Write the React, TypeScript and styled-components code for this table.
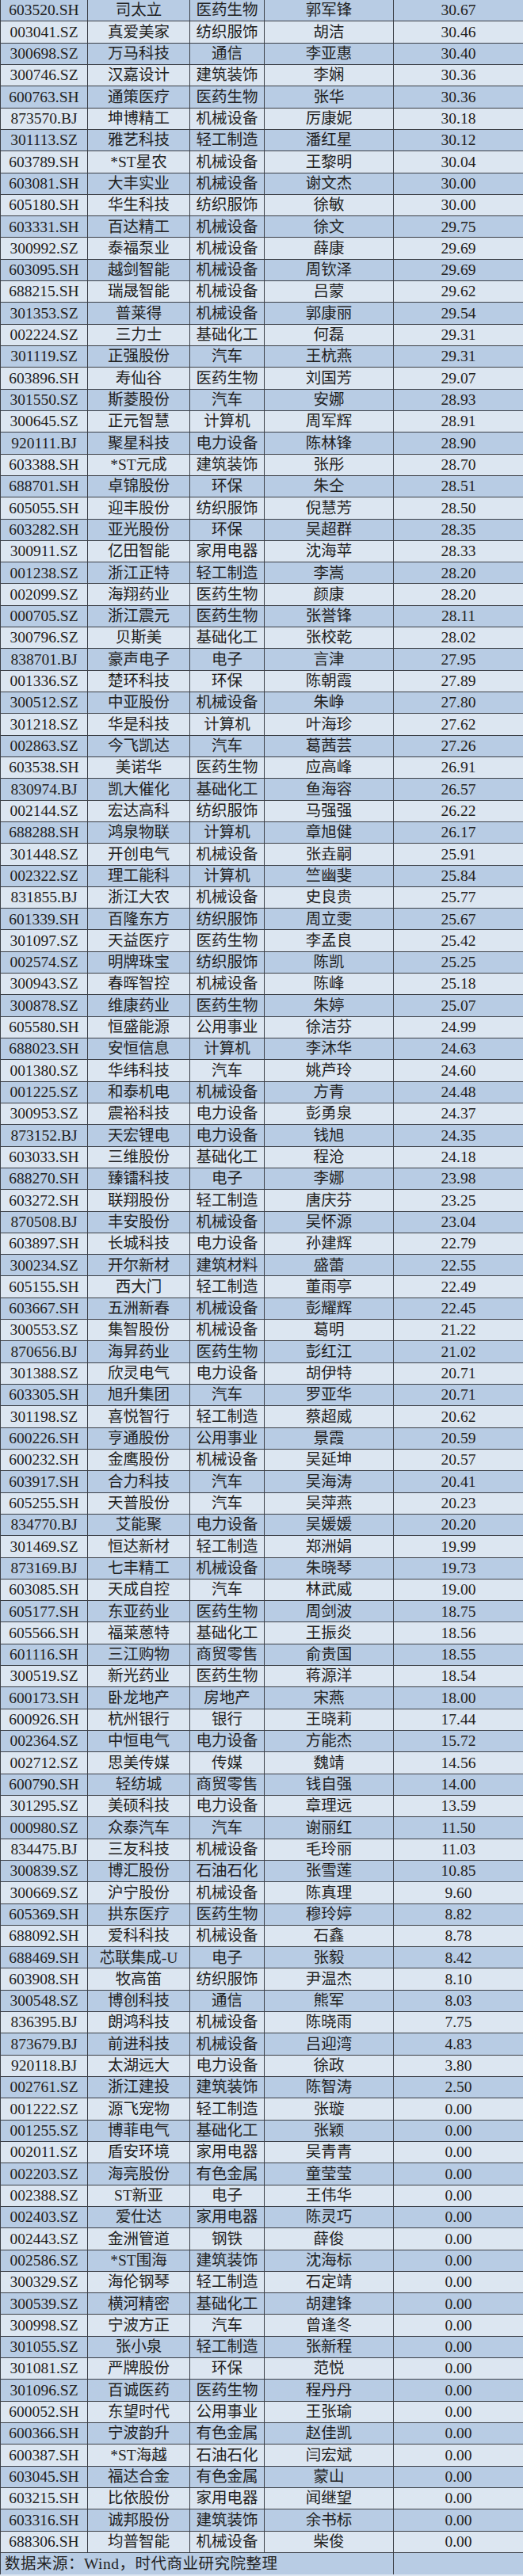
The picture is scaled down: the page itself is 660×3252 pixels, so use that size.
import React from "react";
import styled, { createGlobalStyle } from "styled-components";

const GlobalStyle = createGlobalStyle`
  html, body {
    margin: 0;
    padding: 0;
    background: #dce6f1;
  }
  * { box-sizing: border-box; }
`;

const rawData = `
603520.SH 司太立 医药生物 郭军锋 30.67
003041.SZ 真爱美家 纺织服饰 胡洁 30.46
300698.SZ 万马科技 通信 李亚惠 30.40
300746.SZ 汉嘉设计 建筑装饰 李娴 30.36
600763.SH 通策医疗 医药生物 张华 30.36
873570.BJ 坤博精工 机械设备 厉康妮 30.18
301113.SZ 雅艺科技 轻工制造 潘红星 30.12
603789.SH *ST星农 机械设备 王黎明 30.04
603081.SH 大丰实业 机械设备 谢文杰 30.00
605180.SH 华生科技 纺织服饰 徐敏 30.00
603331.SH 百达精工 机械设备 徐文 29.75
300992.SZ 泰福泵业 机械设备 薛康 29.69
603095.SH 越剑智能 机械设备 周钦泽 29.69
688215.SH 瑞晟智能 机械设备 吕蒙 29.62
301353.SZ 普莱得 机械设备 郭康丽 29.54
002224.SZ 三力士 基础化工 何磊 29.31
301119.SZ 正强股份 汽车 王杭燕 29.31
603896.SH 寿仙谷 医药生物 刘国芳 29.07
301550.SZ 斯菱股份 汽车 安娜 28.93
300645.SZ 正元智慧 计算机 周军辉 28.91
920111.BJ 聚星科技 电力设备 陈林锋 28.90
603388.SH *ST元成 建筑装饰 张彤 28.70
688701.SH 卓锦股份 环保 朱仝 28.51
605055.SH 迎丰股份 纺织服饰 倪慧芳 28.50
603282.SH 亚光股份 环保 吴超群 28.35
300911.SZ 亿田智能 家用电器 沈海苹 28.33
001238.SZ 浙江正特 轻工制造 李嵩 28.20
002099.SZ 海翔药业 医药生物 颜康 28.20
000705.SZ 浙江震元 医药生物 张誉锋 28.11
300796.SZ 贝斯美 基础化工 张校乾 28.02
838701.BJ 豪声电子 电子 言津 27.95
001336.SZ 楚环科技 环保 陈朝霞 27.89
300512.SZ 中亚股份 机械设备 朱峥 27.80
301218.SZ 华是科技 计算机 叶海珍 27.62
002863.SZ 今飞凯达 汽车 葛茜芸 27.26
603538.SH 美诺华 医药生物 应高峰 26.91
830974.BJ 凯大催化 基础化工 鱼海容 26.57
002144.SZ 宏达高科 纺织服饰 马强强 26.22
688288.SH 鸿泉物联 计算机 章旭健 26.17
301448.SZ 开创电气 机械设备 张垚嗣 25.91
002322.SZ 理工能科 计算机 竺幽斐 25.84
831855.BJ 浙江大农 机械设备 史良贵 25.77
601339.SH 百隆东方 纺织服饰 周立雯 25.67
301097.SZ 天益医疗 医药生物 李孟良 25.42
002574.SZ 明牌珠宝 纺织服饰 陈凯 25.25
300943.SZ 春晖智控 机械设备 陈峰 25.18
300878.SZ 维康药业 医药生物 朱婷 25.07
605580.SH 恒盛能源 公用事业 徐洁芬 24.99
688023.SH 安恒信息 计算机 李沐华 24.63
001380.SZ 华纬科技 汽车 姚芦玲 24.60
001225.SZ 和泰机电 机械设备 方青 24.48
300953.SZ 震裕科技 电力设备 彭勇泉 24.37
873152.BJ 天宏锂电 电力设备 钱旭 24.35
603033.SH 三维股份 基础化工 程沧 24.18
688270.SH 臻镭科技 电子 李娜 23.98
603272.SH 联翔股份 轻工制造 唐庆芬 23.25
870508.BJ 丰安股份 机械设备 吴怀源 23.04
603897.SH 长城科技 电力设备 孙建辉 22.79
300234.SZ 开尔新材 建筑材料 盛蕾 22.55
605155.SH 西大门 轻工制造 董雨亭 22.49
603667.SH 五洲新春 机械设备 彭耀辉 22.45
300553.SZ 集智股份 机械设备 葛明 21.22
870656.BJ 海昇药业 医药生物 彭红江 21.02
301388.SZ 欣灵电气 电力设备 胡伊特 20.71
603305.SH 旭升集团 汽车 罗亚华 20.71
301198.SZ 喜悦智行 轻工制造 蔡超威 20.62
600226.SH 亨通股份 公用事业 景霞 20.59
600232.SH 金鹰股份 机械设备 吴延坤 20.57
603917.SH 合力科技 汽车 吴海涛 20.41
605255.SH 天普股份 汽车 吴萍燕 20.23
834770.BJ 艾能聚 电力设备 吴媛媛 20.20
301469.SZ 恒达新材 轻工制造 郑洲娟 19.99
873169.BJ 七丰精工 机械设备 朱晓琴 19.73
603085.SH 天成自控 汽车 林武威 19.00
605177.SH 东亚药业 医药生物 周剑波 18.75
605566.SH 福莱蒽特 基础化工 王振炎 18.56
601116.SH 三江购物 商贸零售 俞贵国 18.55
300519.SZ 新光药业 医药生物 蒋源洋 18.54
600173.SH 卧龙地产 房地产 宋燕 18.00
600926.SH 杭州银行 银行 王晓莉 17.44
002364.SZ 中恒电气 电力设备 方能杰 15.72
002712.SZ 思美传媒 传媒 魏靖 14.56
600790.SH 轻纺城 商贸零售 钱自强 14.00
301295.SZ 美硕科技 电力设备 章理远 13.59
000980.SZ 众泰汽车 汽车 谢丽红 11.50
834475.BJ 三友科技 机械设备 毛玲丽 11.03
300839.SZ 博汇股份 石油石化 张雪莲 10.85
300669.SZ 沪宁股份 机械设备 陈真理 9.60
605369.SH 拱东医疗 医药生物 穆玲婷 8.82
688092.SH 爱科科技 机械设备 石鑫 8.78
688469.SH 芯联集成-U 电子 张毅 8.42
603908.SH 牧高笛 纺织服饰 尹温杰 8.10
300548.SZ 博创科技 通信 熊军 8.03
836395.BJ 朗鸿科技 机械设备 陈晓雨 7.75
873679.BJ 前进科技 机械设备 吕迎湾 4.83
920118.BJ 太湖远大 电力设备 徐政 3.80
002761.SZ 浙江建投 建筑装饰 陈智涛 2.50
001222.SZ 源飞宠物 轻工制造 张璇 0.00
001255.SZ 博菲电气 基础化工 张颖 0.00
002011.SZ 盾安环境 家用电器 吴青青 0.00
002203.SZ 海亮股份 有色金属 童莹莹 0.00
002388.SZ ST新亚 电子 王伟华 0.00
002403.SZ 爱仕达 家用电器 陈灵巧 0.00
002443.SZ 金洲管道 钢铁 薛俊 0.00
002586.SZ *ST围海 建筑装饰 沈海标 0.00
300329.SZ 海伦钢琴 轻工制造 石定靖 0.00
300539.SZ 横河精密 基础化工 胡建锋 0.00
300998.SZ 宁波方正 汽车 曾逢冬 0.00
301055.SZ 张小泉 轻工制造 张新程 0.00
301081.SZ 严牌股份 环保 范悦 0.00
301096.SZ 百诚医药 医药生物 程丹丹 0.00
600052.SH 东望时代 公用事业 王张瑜 0.00
600366.SH 宁波韵升 有色金属 赵佳凯 0.00
600387.SH *ST海越 石油石化 闫宏斌 0.00
603045.SH 福达合金 有色金属 蒙山 0.00
603215.SH 比依股份 家用电器 闻继望 0.00
603316.SH 诚邦股份 建筑装饰 余书标 0.00
688306.SH 均普智能 机械设备 柴俊 0.00
`;

const rows = rawData
  .trim()
  .split("\n")
  .map((line) => line.trim().split(/\s+/));

const ROW_H = "calc(3252px / 119)";
const COLS = "110px 129px 94px 163px 164px";

const Sheet = styled.div`
  width: 660px;
  display: flex;
  flex-direction: column;
  font-family: "Liberation Serif", "Noto Sans CJK SC", serif;
  font-size: 19.5px;
  color: #222;
`;

const Row = styled.div<{ $dark: boolean }>`
  display: grid;
  grid-template-columns: ${COLS};
  height: ${ROW_H};
  background: ${(p) => (p.$dark ? "#b8cce4" : "#dce6f1")};
  border-bottom: 1px solid #3b3f46;
`;

const Cell = styled.div`
  display: flex;
  align-items: center;
  justify-content: center;
  border-left: 1px solid #3b3f46;
  white-space: nowrap;
  overflow: hidden;
  line-height: 1;
`;

const FootRow = styled.div`
  display: grid;
  grid-template-columns: 496px 164px;
  height: ${ROW_H};
  background: #b8cce4;
`;

const Note = styled(Cell)`
  justify-content: flex-start;
  padding-left: 5px;
  letter-spacing: 0.5px;
`;

export default function App() {
  return (
    <>
      <GlobalStyle />
      <Sheet>
        {rows.map((r, i) => (
          <Row key={r[0]} $dark={i % 2 === 0}>
            {r.map((v, j) => (
              <Cell key={j}>{v}</Cell>
            ))}
          </Row>
        ))}
        <FootRow>
          <Note>数据来源：Wind，时代商业研究院整理</Note>
          <Cell />
        </FootRow>
      </Sheet>
    </>
  );
}
